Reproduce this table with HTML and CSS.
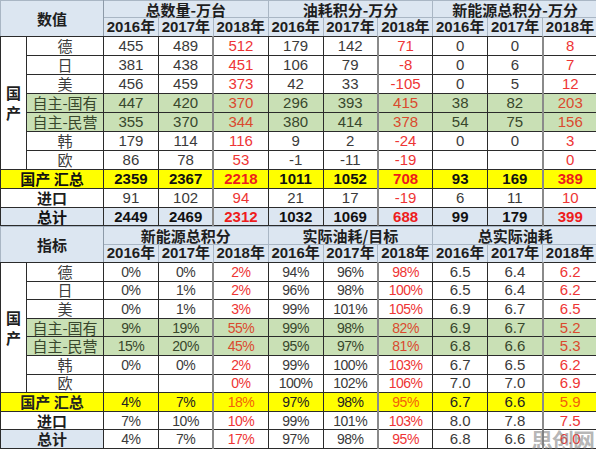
FILE: index.html
```html
<!DOCTYPE html>
<html lang="zh">
<head>
    <meta charset="UTF-8">
    <title>积分统计</title>
    <link rel="stylesheet" href="styles.css">
</head>
<body>
    <div class="sheet">
        <table class="grid first">
            <colgroup>
                <col class="c-side"><col class="c-name">
                <col><col><col><col><col><col><col><col><col>
            </colgroup>
            <tr class="hd top">
                <th colspan="2" rowspan="2" class="big">数值</th>
                <th colspan="3" class="grp">总数量-万台</th>
                <th colspan="3" class="grp">油耗积分-万分</th>
                <th colspan="3" class="grp">新能源总积分-万分</th>
            </tr>
            <tr class="hd">
                <th>2016年</th><th>2017年</th><th>2018年</th>
                <th>2016年</th><th>2017年</th><th>2018年</th>
                <th>2016年</th><th>2017年</th><th>2018年</th>
            </tr>
            <tr>
                <td rowspan="7" class="side">国<br>产</td>
                <td class="name">德</td>
                <td>455</td><td>489</td><td class="y18">512</td>
                <td>179</td><td>142</td><td class="y18">71</td>
                <td>0</td><td>0</td><td class="y18">8</td>
            </tr>
            <tr>
                <td class="name">日</td>
                <td>381</td><td>438</td><td class="y18">451</td>
                <td>106</td><td>79</td><td class="y18">-8</td>
                <td>0</td><td>6</td><td class="y18">7</td>
            </tr>
            <tr>
                <td class="name">美</td>
                <td>456</td><td>459</td><td class="y18">373</td>
                <td>42</td><td>33</td><td class="y18">-105</td>
                <td>0</td><td>5</td><td class="y18">12</td>
            </tr>
            <tr class="grn">
                <td class="name">自主-国有</td>
                <td>447</td><td>420</td><td class="y18">370</td>
                <td>296</td><td>393</td><td class="y18">415</td>
                <td>38</td><td>82</td><td class="y18">203</td>
            </tr>
            <tr class="grn">
                <td class="name">自主-民营</td>
                <td>355</td><td>370</td><td class="y18">344</td>
                <td>380</td><td>414</td><td class="y18">378</td>
                <td>54</td><td>75</td><td class="y18">156</td>
            </tr>
            <tr>
                <td class="name">韩</td>
                <td>179</td><td>114</td><td class="y18">116</td>
                <td>9</td><td>2</td><td class="y18">-24</td>
                <td>0</td><td>0</td><td class="y18">3</td>
            </tr>
            <tr>
                <td class="name">欧</td>
                <td>86</td><td>78</td><td class="y18">53</td>
                <td>-1</td><td>-11</td><td class="y18">-19</td>
                <td></td><td></td><td class="y18">0</td>
            </tr>
            <tr class="ylw bold">
                <td colspan="2" class="label">国产 汇总</td>
                <td>2359</td><td>2367</td><td class="y18">2218</td>
                <td>1011</td><td>1052</td><td class="y18">708</td>
                <td>93</td><td>169</td><td class="y18">389</td>
            </tr>
            <tr>
                <td colspan="2" class="label">进口</td>
                <td>91</td><td>102</td><td class="y18">94</td>
                <td>21</td><td>17</td><td class="y18">-19</td>
                <td>6</td><td>11</td><td class="y18">10</td>
            </tr>
            <tr class="blu bold end">
                <td colspan="2" class="label">总计</td>
                <td>2449</td><td>2469</td><td class="y18">2312</td>
                <td>1032</td><td>1069</td><td class="y18">688</td>
                <td>99</td><td>179</td><td class="y18">399</td>
            </tr>
        </table>

        <table class="grid second">
            <colgroup>
                <col class="c-side"><col class="c-name">
                <col><col><col><col><col><col><col><col><col>
            </colgroup>
            <tr class="hd top">
                <th colspan="2" rowspan="2" class="big">指标</th>
                <th colspan="3" class="grp">新能源总积分</th>
                <th colspan="3" class="grp">实际油耗/目标</th>
                <th colspan="3" class="grp">总实际油耗</th>
            </tr>
            <tr class="hd">
                <th>2016年</th><th>2017年</th><th>2018年</th>
                <th>2016年</th><th>2017年</th><th>2018年</th>
                <th>2016年</th><th>2017年</th><th>2018年</th>
            </tr>
            <tr>
                <td rowspan="7" class="side">国<br>产</td>
                <td class="name">德</td>
                <td class="pct">0%</td><td class="pct">0%</td><td class="y18 pct">2%</td>
                <td class="pct">94%</td><td class="pct">96%</td><td class="y18 pct">98%</td>
                <td>6.5</td><td>6.4</td><td class="y18">6.2</td>
            </tr>
            <tr>
                <td class="name">日</td>
                <td class="pct">0%</td><td class="pct">1%</td><td class="y18 pct">2%</td>
                <td class="pct">96%</td><td class="pct">98%</td><td class="y18 pct">100%</td>
                <td>6.5</td><td>6.4</td><td class="y18">6.2</td>
            </tr>
            <tr>
                <td class="name">美</td>
                <td class="pct">0%</td><td class="pct">1%</td><td class="y18 pct">3%</td>
                <td class="pct">99%</td><td class="pct">101%</td><td class="y18 pct">105%</td>
                <td>6.9</td><td>6.7</td><td class="y18">6.5</td>
            </tr>
            <tr class="grn">
                <td class="name">自主-国有</td>
                <td class="pct">9%</td><td class="pct">19%</td><td class="y18 pct">55%</td>
                <td class="pct">99%</td><td class="pct">98%</td><td class="y18 pct">82%</td>
                <td>6.9</td><td>6.7</td><td class="y18">5.2</td>
            </tr>
            <tr class="grn">
                <td class="name">自主-民营</td>
                <td class="pct">15%</td><td class="pct">20%</td><td class="y18 pct">45%</td>
                <td class="pct">95%</td><td class="pct">97%</td><td class="y18 pct">81%</td>
                <td>6.8</td><td>6.6</td><td class="y18">5.3</td>
            </tr>
            <tr>
                <td class="name">韩</td>
                <td class="pct">0%</td><td class="pct">0%</td><td class="y18 pct">2%</td>
                <td class="pct">99%</td><td class="pct">100%</td><td class="y18 pct">103%</td>
                <td>6.7</td><td>6.5</td><td class="y18">6.2</td>
            </tr>
            <tr>
                <td class="name">欧</td>
                <td></td><td></td><td class="y18 pct">0%</td>
                <td class="pct">100%</td><td class="pct">102%</td><td class="y18 pct">106%</td>
                <td>7.0</td><td>7.0</td><td class="y18">6.9</td>
            </tr>
            <tr class="ylw">
                <td colspan="2" class="label">国产 汇总</td>
                <td class="pct">4%</td><td class="pct">7%</td><td class="y18 pct">18%</td>
                <td class="pct">97%</td><td class="pct">98%</td><td class="y18 pct">95%</td>
                <td>6.7</td><td>6.6</td><td class="y18">5.9</td>
            </tr>
            <tr>
                <td colspan="2" class="label">进口</td>
                <td class="pct">7%</td><td class="pct">10%</td><td class="y18 pct">10%</td>
                <td class="pct">99%</td><td class="pct">101%</td><td class="y18 pct">103%</td>
                <td>8.0</td><td>7.8</td><td class="y18">7.5</td>
            </tr>
            <tr>
                <td colspan="2" class="label blu">总计</td>
                <td class="pct">4%</td><td class="pct">7%</td><td class="y18 pct">17%</td>
                <td class="pct">97%</td><td class="pct">98%</td><td class="y18 pct">95%</td>
                <td>6.8</td><td>6.6</td><td class="y18">6.0</td>
            </tr>
        </table>

        <div class="watermark">思创网</div>
    </div>
</body>
</html>
```

FILE: styles.css
```css
* {
    margin: 0;
    padding: 0;
    box-sizing: border-box;
}

body {
    background-color: #ffffff;
    font-family: "Liberation Sans", Arial, "Noto Sans CJK SC", sans-serif;
    color: #3a3a3a;
}

.sheet {
    position: relative;
    width: 596px;
    height: 449px;
    overflow: hidden;
}

.grid {
    width: 598px;
    table-layout: fixed;
    border-collapse: collapse;
}

.c-side {
    width: 26px;
}

.c-name {
    width: 77px;
}

.grid td,
.grid th {
    border: 1px solid #2b2b2b;
    padding: 0;
    text-align: center;
    vertical-align: middle;
    font-size: 15px;
    line-height: 16px;
    white-space: nowrap;
}

.grid tr {
    height: 19px;
}

.first tr.top {
    height: 17px;
}

.first tr.end {
    height: 18px;
}

.second tr {
    height: 18.6px;
}

.second tr.top {
    height: 17.5px;
}

/* header */
.grid .hd th {
    background-color: #dce6f1;
    color: #1e1e1e;
    font-weight: bold;
    border-color: #a9b6c4;
    border-bottom-color: #2b2b2b;
}

.grid .hd th.big,
.grid .hd th.grp {
    font-family: "Noto Sans CJK SC", sans-serif;
    font-size: 15px;
    line-height: 15px;
}

.grid .hd th.big {
    border-right-color: #8d9aa8;
}

.grid .hd th.grp {
    border-bottom-color: #a9b6c4;
}

.grid td.side {
    font-family: "Noto Sans CJK SC", sans-serif;
    font-weight: bold;
    font-size: 15px;
    line-height: 20px;
    color: #1e1e1e;
}

.grid td.name {
    font-family: "Noto Sans CJK SC", sans-serif;
    font-weight: 400;
    font-size: 15px;
    color: #3c3c3c;
}

.grid td.label {
    font-family: "Noto Sans CJK SC", sans-serif;
    font-weight: bold;
    font-size: 15px;
    color: #1e1e1e;
}

.grid td.pct {
    font-size: 14px;
    letter-spacing: -0.5px;
}

.grid td.y18 {
    color: #ee3535;
    border-left: 2px solid #8a8a8a;
}

/* row fills */
.grid .grn td {
    background-color: #c9e0b5;
    color: #38472c;
}

.grid .grn td.y18 {
    color: #da4a2e;
}

.grid .ylw td {
    background-color: #ffff00;
    color: #222222;
}

.grid .ylw td.y18 {
    color: #f2620a;
}

.grid .blu td,
.grid td.blu {
    background-color: #dce6f1;
}

.grid .bold td {
    font-weight: bold;
    color: #111111;
}

.grid .bold td.y18 {
    color: #ee1c1c;
}

.watermark {
    position: absolute;
    right: 2px;
    bottom: -5px;
    font-family: "Noto Sans CJK SC", sans-serif;
    font-weight: bold;
    font-size: 22px;
    line-height: 30px;
    letter-spacing: -1px;
    color: rgba(120, 120, 120, 0.55);
}
```
